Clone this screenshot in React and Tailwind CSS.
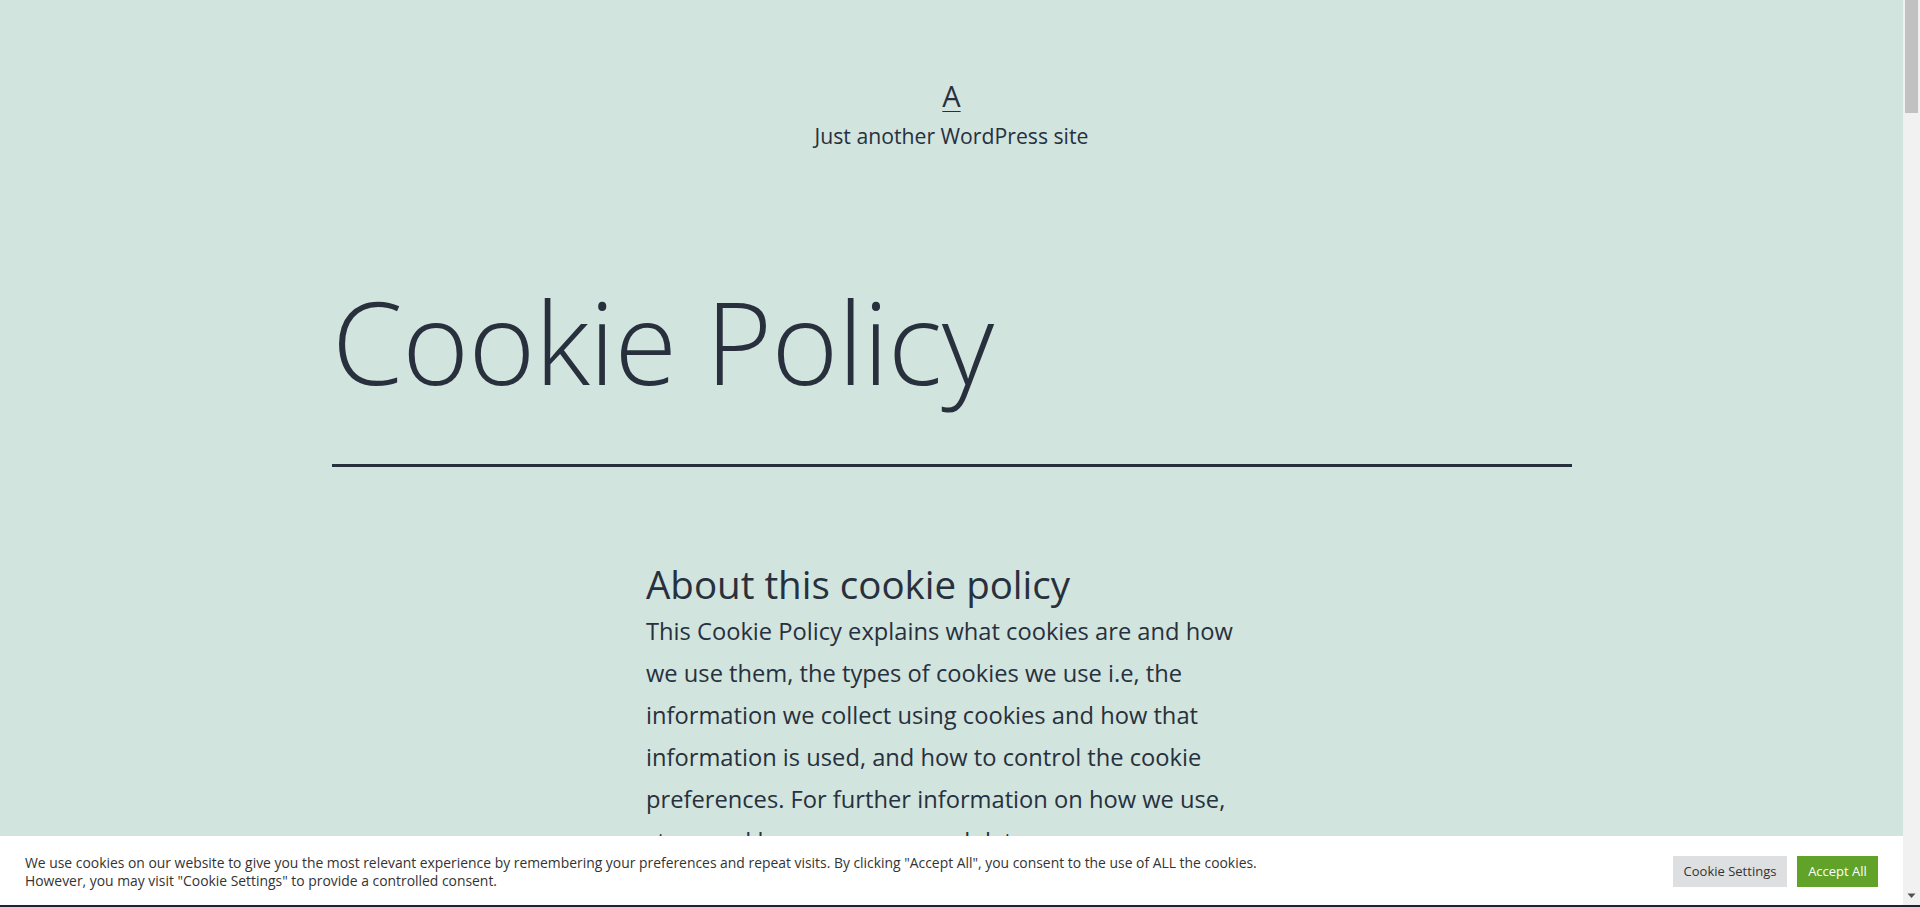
import React from "react";

const FONT = { fontFamily: '"Open Sans", "Noto Sans", "Liberation Sans", sans-serif' };

export default function App() {
  const lines = [
    "This Cookie Policy explains what cookies are and how",
    "we use them, the types of cookies we use i.e, the",
    "information we collect using cookies and how that",
    "information is used, and how to control the cookie",
    "preferences. For further information on how we use,",
    "store and keep your personal data secure, see our",
    "Privacy Policy.",
  ];
  return (
    <div className="relative flex h-[907px] w-full overflow-hidden bg-[#d1e4dd] text-[#28303d]" style={FONT}>
      <div className="relative flex-1">
        <header className="flex flex-col items-center pt-[78px]">
          <a href="#" className="text-[29px] leading-[36px] underline decoration-1 underline-offset-[4px] text-[#28303d]">A</a>
          <p className="mt-[7px] text-[21.2px] leading-[30px]">Just another WordPress site</p>
        </header>
        <main className="pl-[332px] pr-[331px]">
          <h1 className="mt-[120px] text-[114px] font-light leading-[140px] tracking-[-0.6px]">Cookie Policy</h1>
          <div className="mt-[53px] h-[3px] bg-[#28303d]" />
          <div className="ml-[314px] mt-[93px]">
            <h2 className="text-[38.5px] leading-[48px]">About this cookie policy</h2>
            <p className="mt-[2px] whitespace-nowrap text-[23.7px] leading-[42px]">
              {lines.map((l, i) => (
                <React.Fragment key={i}>
                  {l}
                  <br />
                </React.Fragment>
              ))}
            </p>
          </div>
        </main>
        <div className="absolute bottom-[2px] left-0 right-0 z-10 flex h-[69px] items-center justify-between bg-white pl-[25px] pr-[25px] pt-[2px]">
          <p className="text-[13.9px] leading-[18px] text-[#333333]">
            We use cookies on our website to give you the most relevant experience by remembering your preferences and repeat visits. By clicking "Accept All", you consent to the use of ALL the cookies.
            <br />
            However, you may visit "Cookie Settings" to provide a controlled consent.
          </p>
          <div className="flex gap-[10px]">
            <button className="h-[31px] w-[114px] bg-[#dedfe0] text-[13px] text-[#333333]">Cookie Settings</button>
            <button className="h-[31px] w-[81px] bg-[#61a229] text-[13px] text-white">Accept All</button>
          </div>
        </div>
      </div>
      <div className="relative w-[17px] bg-[#f1f1f1]">
        <div className="mx-[2px] h-[113px] bg-[#c1c1c1]" />
        <svg className="absolute bottom-[8px] left-[4px]" width="9" height="6" viewBox="0 0 9 6">
          <path d="M0.5 0.5 H8.5 L4.5 5 Z" fill="#505050" />
        </svg>
      </div>
      <div className="absolute bottom-0 left-0 right-0 h-[2px] bg-[#1d2330]" />
    </div>
  );
}
